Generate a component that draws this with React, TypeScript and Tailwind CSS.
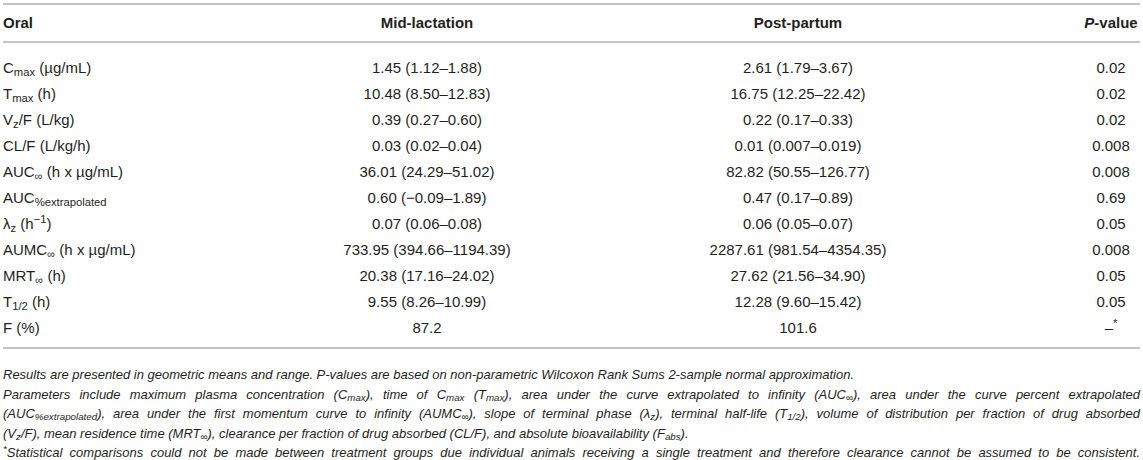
import React from 'react'

const rows: { label: React.ReactNode; mid: string; post: string; p: React.ReactNode }[] = [
  { label: <>C<sub>max</sub> (µg/mL)</>, mid: '1.45 (1.12–1.88)', post: '2.61 (1.79–3.67)', p: '0.02' },
  { label: <>T<sub>max</sub> (h)</>, mid: '10.48 (8.50–12.83)', post: '16.75 (12.25–22.42)', p: '0.02' },
  { label: <>V<sub>z</sub>/F (L/kg)</>, mid: '0.39 (0.27–0.60)', post: '0.22 (0.17–0.33)', p: '0.02' },
  { label: 'CL/F (L/kg/h)', mid: '0.03 (0.02–0.04)', post: '0.01 (0.007–0.019)', p: '0.008' },
  { label: <>AUC<sub>∞</sub> (h x µg/mL)</>, mid: '36.01 (24.29–51.02)', post: '82.82 (50.55–126.77)', p: '0.008' },
  { label: <>AUC<sub>%extrapolated</sub></>, mid: '0.60 (−0.09–1.89)', post: '0.47 (0.17–0.89)', p: '0.69' },
  { label: <>λ<sub>z</sub> (h<sup>−1</sup>)</>, mid: '0.07 (0.06–0.08)', post: '0.06 (0.05–0.07)', p: '0.05' },
  { label: <>AUMC<sub>∞</sub> (h x µg/mL)</>, mid: '733.95 (394.66–1194.39)', post: '2287.61 (981.54–4354.35)', p: '0.008' },
  { label: <>MRT<sub>∞</sub> (h)</>, mid: '20.38 (17.16–24.02)', post: '27.62 (21.56–34.90)', p: '0.05' },
  { label: <>T<sub>1/2</sub> (h)</>, mid: '9.55 (8.26–10.99)', post: '12.28 (9.60–15.42)', p: '0.05' },
  { label: 'F (%)', mid: '87.2', post: '101.6', p: <>–<sup>*</sup></> },
]

const cols = 'grid grid-cols-[337px_174px_568px_58px]'

export default function App() {
  return (
    <div className="w-[1143px] bg-white px-[3px] pt-[3px] text-[#231f20] font-['Liberation_Sans',Arial,sans-serif]">
      {/* table */}
      <div className="border-t-2 border-b-2 border-[#c4c4c4] text-[15px]">
        <div className={`${cols} h-[38px] items-center border-b-2 border-[#c4c4c4] font-bold`}>
          <div>Oral</div>
          <div className="text-center">Mid-lactation</div>
          <div className="text-center">Post-partum</div>
          <div className="text-center whitespace-nowrap"><i>P</i>-value</div>
        </div>
        <div className="pt-3 pb-[6px]">
          {rows.map((r, i) => (
            <div key={i} className={`${cols} h-[26px] items-center whitespace-nowrap`}>
              <div>{r.label}</div>
              <div className="text-center">{r.mid}</div>
              <div className="text-center">{r.post}</div>
              <div className="text-center">{r.p}</div>
            </div>
          ))}
        </div>
      </div>

      {/* footnotes */}
      <div className="pt-4 text-[13px] italic leading-[19.5px] whitespace-nowrap">
        <div>Results are presented in geometric means and range. P-values are based on non-parametric Wilcoxon Rank Sums 2-sample normal approximation.</div>
        <div className="text-justify [text-align-last:justify]">
          Parameters include maximum plasma concentration (C<sub>max</sub>), time of C<sub>max</sub> (T<sub>max</sub>), area under the curve extrapolated to infinity (AUC<sub>∞</sub>), area under the curve percent extrapolated
        </div>
        <div className="text-justify [text-align-last:justify]">
          (AUC<sub>%extrapolated</sub>), area under the first momentum curve to infinity (AUMC<sub>∞</sub>), slope of terminal phase (λ<sub>z</sub>), terminal half-life (T<sub>1/2</sub>), volume of distribution per fraction of drug absorbed
        </div>
        <div>
          (V<sub>z</sub>/F), mean residence time (MRT<sub>∞</sub>), clearance per fraction of drug absorbed (CL/F), and absolute bioavailability (F<sub>abs</sub>).
        </div>
        <div className="text-justify [text-align-last:justify]">
          <sup>*</sup>Statistical comparisons could not be made between treatment groups due individual animals receiving a single treatment and therefore clearance cannot be assumed to be consistent.
        </div>
      </div>
    </div>
  )
}
